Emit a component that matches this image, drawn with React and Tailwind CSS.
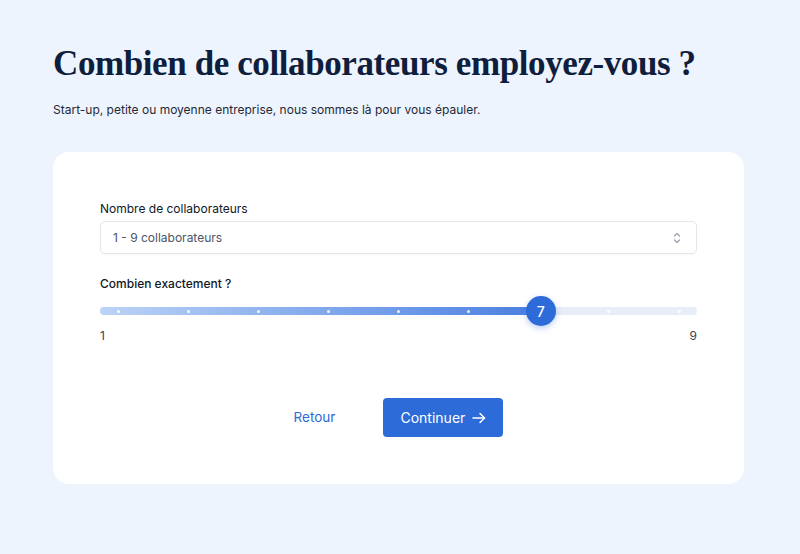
import React from 'react';

const serif = { fontFamily: '"Liberation Serif", "DejaVu Serif", serif' };

function Slider({ min = 1, max = 9, value = 7 }) {
  const steps = [];
  for (let i = min; i <= max; i++) steps.push(i);
  const pct = (value - min) / (max - min);

  return (
    <div>
      <div className="relative h-[8px] rounded-full bg-[#e8eef8]">
        <div
          className="absolute left-0 top-0 h-full rounded-full bg-gradient-to-r from-[#bcd3f6] to-[#4a7fe0]"
          style={{ width: `calc(18px + ${pct} * (100% - 36px))` }}
        />
        <div className="absolute inset-y-0 left-[18px] right-[18px]">
          {steps.map((s) => (
            <span
              key={s}
              className="absolute top-1/2 w-[3px] h-[3px] -ml-[1.5px] -mt-[1.5px] rounded-full bg-white/90"
              style={{ left: `${((s - min) / (max - min)) * 100}%` }}
            />
          ))}
          <div
            className="absolute top-1/2 -translate-x-1/2 -translate-y-1/2 w-[30px] h-[30px] rounded-full bg-[#2d6bd9] text-white flex items-center justify-center text-[14px] font-medium shadow-[0_2px_6px_rgba(45,107,217,0.35)]"
            style={{ left: `calc(${pct * 100}% + 2px)` }}
          >
            {value}
          </div>
        </div>
      </div>
      <div className="flex justify-between mt-[12px] text-[12px] leading-[18px] text-[#3a4252]">
        <span>{min}</span>
        <span>{max}</span>
      </div>
    </div>
  );
}

export default function App() {
  return (
    <div
      className="min-h-[554px] w-full bg-[#eef4fd] px-[53px] pt-[40px] pb-[70px]"
      style={{ fontFamily: 'Inter, "Noto Sans", sans-serif' }}
    >
      <h1 className="text-[35px] leading-[48px] font-bold text-[#0f1e3c] tracking-[-0.4px]" style={serif}>
        Combien de collaborateurs employez-vous ?
      </h1>
      <p className="mt-[13px] text-[12px] leading-[18px] text-[#1f2937]">
        Start-up, petite ou moyenne entreprise, nous sommes là pour vous épauler.
      </p>

      <div className="mt-[33px] w-[691px] rounded-[16px] bg-white px-[47px] pt-[48px] pb-[47px]">
        <label className="block text-[12px] leading-[18px] text-[#111827]">Nombre de collaborateurs</label>
        <div className="mt-[3px] h-[33px] rounded-[5px] border border-[#e3e6eb] shadow-[0_1px_2px_rgba(0,0,0,0.03)] flex items-center justify-between pl-[12px] pr-[14px] text-[12px] text-[#4b5563]">
          <span>1 - 9 collaborateurs</span>
          <svg width="10" height="14" viewBox="0 0 10 14" fill="none" stroke="#9ca3af" strokeWidth="1.3" strokeLinecap="round" strokeLinejoin="round">
            <path d="M2.5 5 L5 2.5 L7.5 5" />
            <path d="M2.5 9 L5 11.5 L7.5 9" />
          </svg>
        </div>

        <label className="block mt-[21px] text-[12px] leading-[18px] font-medium text-[#111827]">Combien exactement ?</label>
        <div className="mt-[14px]">
          <Slider min={1} max={9} value={7} />
        </div>

        <div className="mt-[53px] flex items-center justify-center gap-[48px]">
          <button className="text-[13.5px] text-[#2d6bd9]">Retour</button>
          <button className="h-[39px] w-[120px] rounded-[4px] bg-[#2d6bd9] text-white text-[14px] flex items-center justify-center gap-[7px]">
            Continuer
            <svg width="14" height="12" viewBox="0 0 14 12" fill="none" stroke="white" strokeWidth="1.5" strokeLinecap="round" strokeLinejoin="round">
              <path d="M1 6 H12.5" />
              <path d="M8 1.5 L12.5 6 L8 10.5" />
            </svg>
          </button>
        </div>
      </div>
    </div>
  );
}
